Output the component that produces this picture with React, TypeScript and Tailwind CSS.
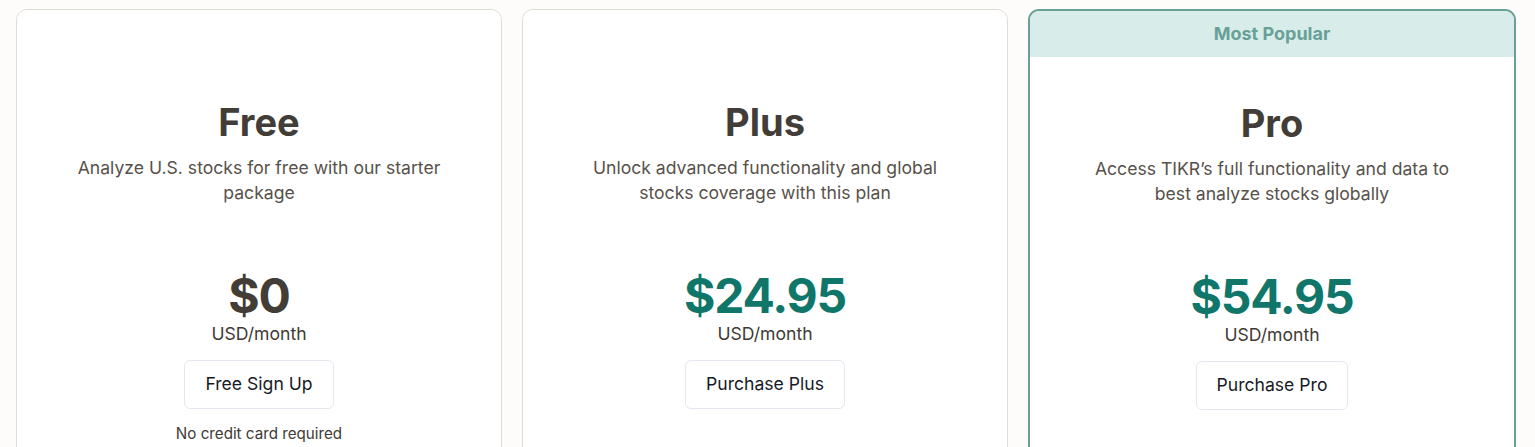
import React from 'react'

interface Plan {
  name: string
  description: string
  price: string
  cta: string
  highlight?: boolean
  note?: string
}

const plans: Plan[] = [
  {
    name: 'Free',
    description: 'Analyze U.S. stocks for free with our starter package',
    price: '$0',
    cta: 'Free Sign Up',
    note: 'No credit card required',
  },
  {
    name: 'Plus',
    description: 'Unlock advanced functionality and global stocks coverage with this plan',
    price: '$24.95',
    cta: 'Purchase Plus',
  },
  {
    name: 'Pro',
    description: 'Access TIKR’s full functionality and data to best analyze stocks globally',
    price: '$54.95',
    cta: 'Purchase Pro',
    highlight: true,
  },
]

function PlanCard({ plan }: { plan: Plan }) {
  return (
    <div
      className={`h-[460px] overflow-hidden rounded-[11px] bg-white ${
        plan.highlight ? 'border-2 border-[#6a9f98]' : 'border border-[#dedad5]'
      }`}
    >
      <div
        className={`flex h-[46px] items-center justify-center pb-[2px] text-[18px] font-bold ${
          plan.highlight ? 'bg-[#d8edea] text-[#68a097]' : 'bg-white text-transparent'
        }`}
      >
        {plan.highlight ? 'Most Popular' : ''}
      </div>
      <div className="flex flex-col items-center text-center">
        <h2 className="mt-[43px] text-[38px] leading-[46px] font-bold text-[#433d37]">{plan.name}</h2>
        <p className="mt-[10px] h-[51px] w-[380px] text-[17.6px] leading-[25px] text-[#57514b]">
          {plan.description}
        </p>
        <div
          className={`mt-[66px] text-[48px] leading-[48px] font-bold tracking-tight ${
            plan.highlight || plan.name === 'Plus' ? 'text-[#10766a]' : 'text-[#433d37]'
          }`}
        >
          {plan.price}
        </div>
        <div className="mt-[1px] text-[17.6px] leading-[25px] text-[#3f3a35]">USD/month</div>
        <button className="mt-[14px] h-[49px] rounded-md border border-[#e3e7ef] bg-white px-[20px] text-[17.6px] text-[#171a26]">
          {plan.cta}
        </button>
        {plan.note && (
          <p className="mt-[15px] text-[15.2px] leading-[20px] text-[#3f3a35]">{plan.note}</p>
        )}
      </div>
    </div>
  )
}

export default function App() {
  return (
    <div className="h-[447px] overflow-hidden bg-[#fdfcfa] pl-4 pt-[9px] font-['Inter',sans-serif]">
      <div className="grid grid-cols-[486px_486px_488px] gap-5">
        {plans.map((p) => (
          <PlanCard key={p.name} plan={p} />
        ))}
      </div>
    </div>
  )
}
